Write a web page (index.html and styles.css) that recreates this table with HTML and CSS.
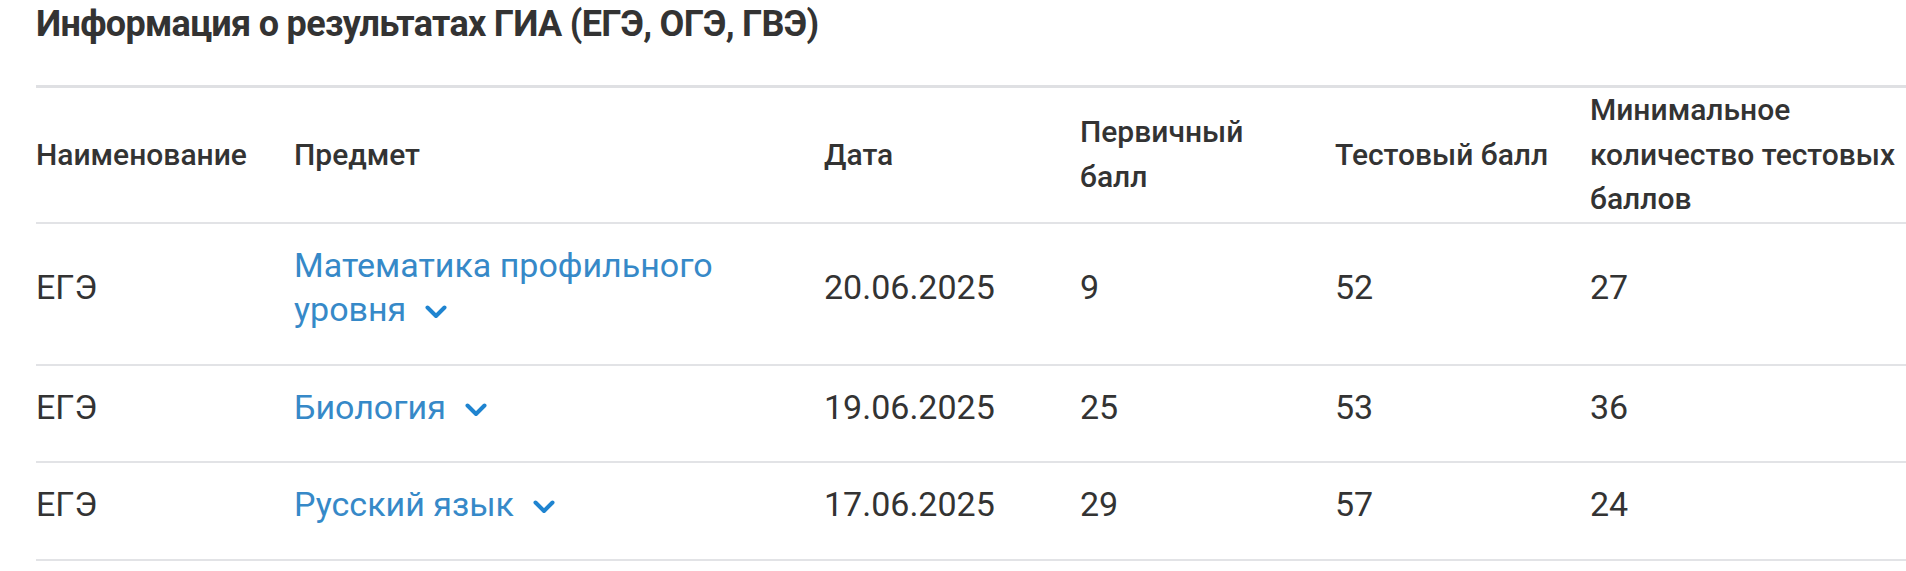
FILE: index.html
```html
<!DOCTYPE html>
<html lang="ru">
<head>
<meta charset="utf-8">
<title>Информация о результатах ГИА</title>
<link rel="stylesheet" href="styles.css">
</head>
<body>
<section class="results">
  <h1 class="results__title">Информация о результатах ГИА (ЕГЭ, ОГЭ, ГВЭ)</h1>
  <table class="results__table">
    <colgroup>
      <col class="col-name">
      <col class="col-subject">
      <col class="col-date">
      <col class="col-primary">
      <col class="col-test">
      <col class="col-min">
    </colgroup>
    <thead>
      <tr>
        <th>Наименование</th>
        <th>Предмет</th>
        <th>Дата</th>
        <th>Первичный балл</th>
        <th>Тестовый балл</th>
        <th>Минимальное количество тестовых баллов</th>
      </tr>
    </thead>
    <tbody>
      <tr>
        <td>ЕГЭ</td>
        <td><a class="subject" href="#">Математика профильного уровня<svg class="chevron" viewBox="0 0 22 14" aria-hidden="true"><polyline points="2.5,2.5 11,11 19.5,2.5"/></svg></a></td>
        <td>20.06.2025</td>
        <td>9</td>
        <td>52</td>
        <td>27</td>
      </tr>
      <tr>
        <td>ЕГЭ</td>
        <td><a class="subject" href="#">Биология<svg class="chevron" viewBox="0 0 22 14" aria-hidden="true"><polyline points="2.5,2.5 11,11 19.5,2.5"/></svg></a></td>
        <td>19.06.2025</td>
        <td>25</td>
        <td>53</td>
        <td>36</td>
      </tr>
      <tr>
        <td>ЕГЭ</td>
        <td><a class="subject" href="#">Русский язык<svg class="chevron" viewBox="0 0 22 14" aria-hidden="true"><polyline points="2.5,2.5 11,11 19.5,2.5"/></svg></a></td>
        <td>17.06.2025</td>
        <td>29</td>
        <td>57</td>
        <td>24</td>
      </tr>
    </tbody>
  </table>
</section>
</body>
</html>
```

FILE: styles.css
```css
html, body {
  margin: 0;
  padding: 0;
  background: #ffffff;
  overflow: hidden;
}

.results {
  padding: 4px 0 0 36px;
}

.results__title {
  margin: 0 0 40px 0;
  font-family: Roboto, "Noto Sans", sans-serif;
  font-weight: 700;
  font-size: 36px;
  line-height: 41px;
  letter-spacing: -0.7px;
  color: #333333;
}

.results__table {
  width: 1870px;
  table-layout: fixed;
  border-collapse: collapse;
  border-top: 3px solid #dfe0e3;
  font-family: Roboto, "Noto Sans", sans-serif;
  font-size: 34px;
  line-height: 44.5px;
  color: #333333;
}

.col-name { width: 258px; }
.col-subject { width: 530px; }
.col-date { width: 256px; }
.col-primary { width: 255px; }
.col-test { width: 255px; }

.results__table th {
  text-align: left;
  font-weight: 500;
  font-size: 30px;
  line-height: 44.5px;
  padding: 0 30px 0 0;
  vertical-align: middle;
  border-bottom: 2px solid #e2e3e6;
}

.results__table td {
  padding: 19px 30px 32px 0;
  vertical-align: middle;
  border-bottom: 2px solid #e2e3e6;
}

.results__table th:last-child,
.results__table td:last-child {
  padding-right: 0;
}

.subject {
  color: #3689c8;
  text-decoration: none;
}

.chevron {
  display: inline-block;
  width: 22px;
  height: 14px;
  margin-left: 19px;
  vertical-align: 2px;
  fill: none;
  stroke: #1f84d0;
  stroke-width: 4;
  stroke-linecap: round;
  stroke-linejoin: round;
}
```
